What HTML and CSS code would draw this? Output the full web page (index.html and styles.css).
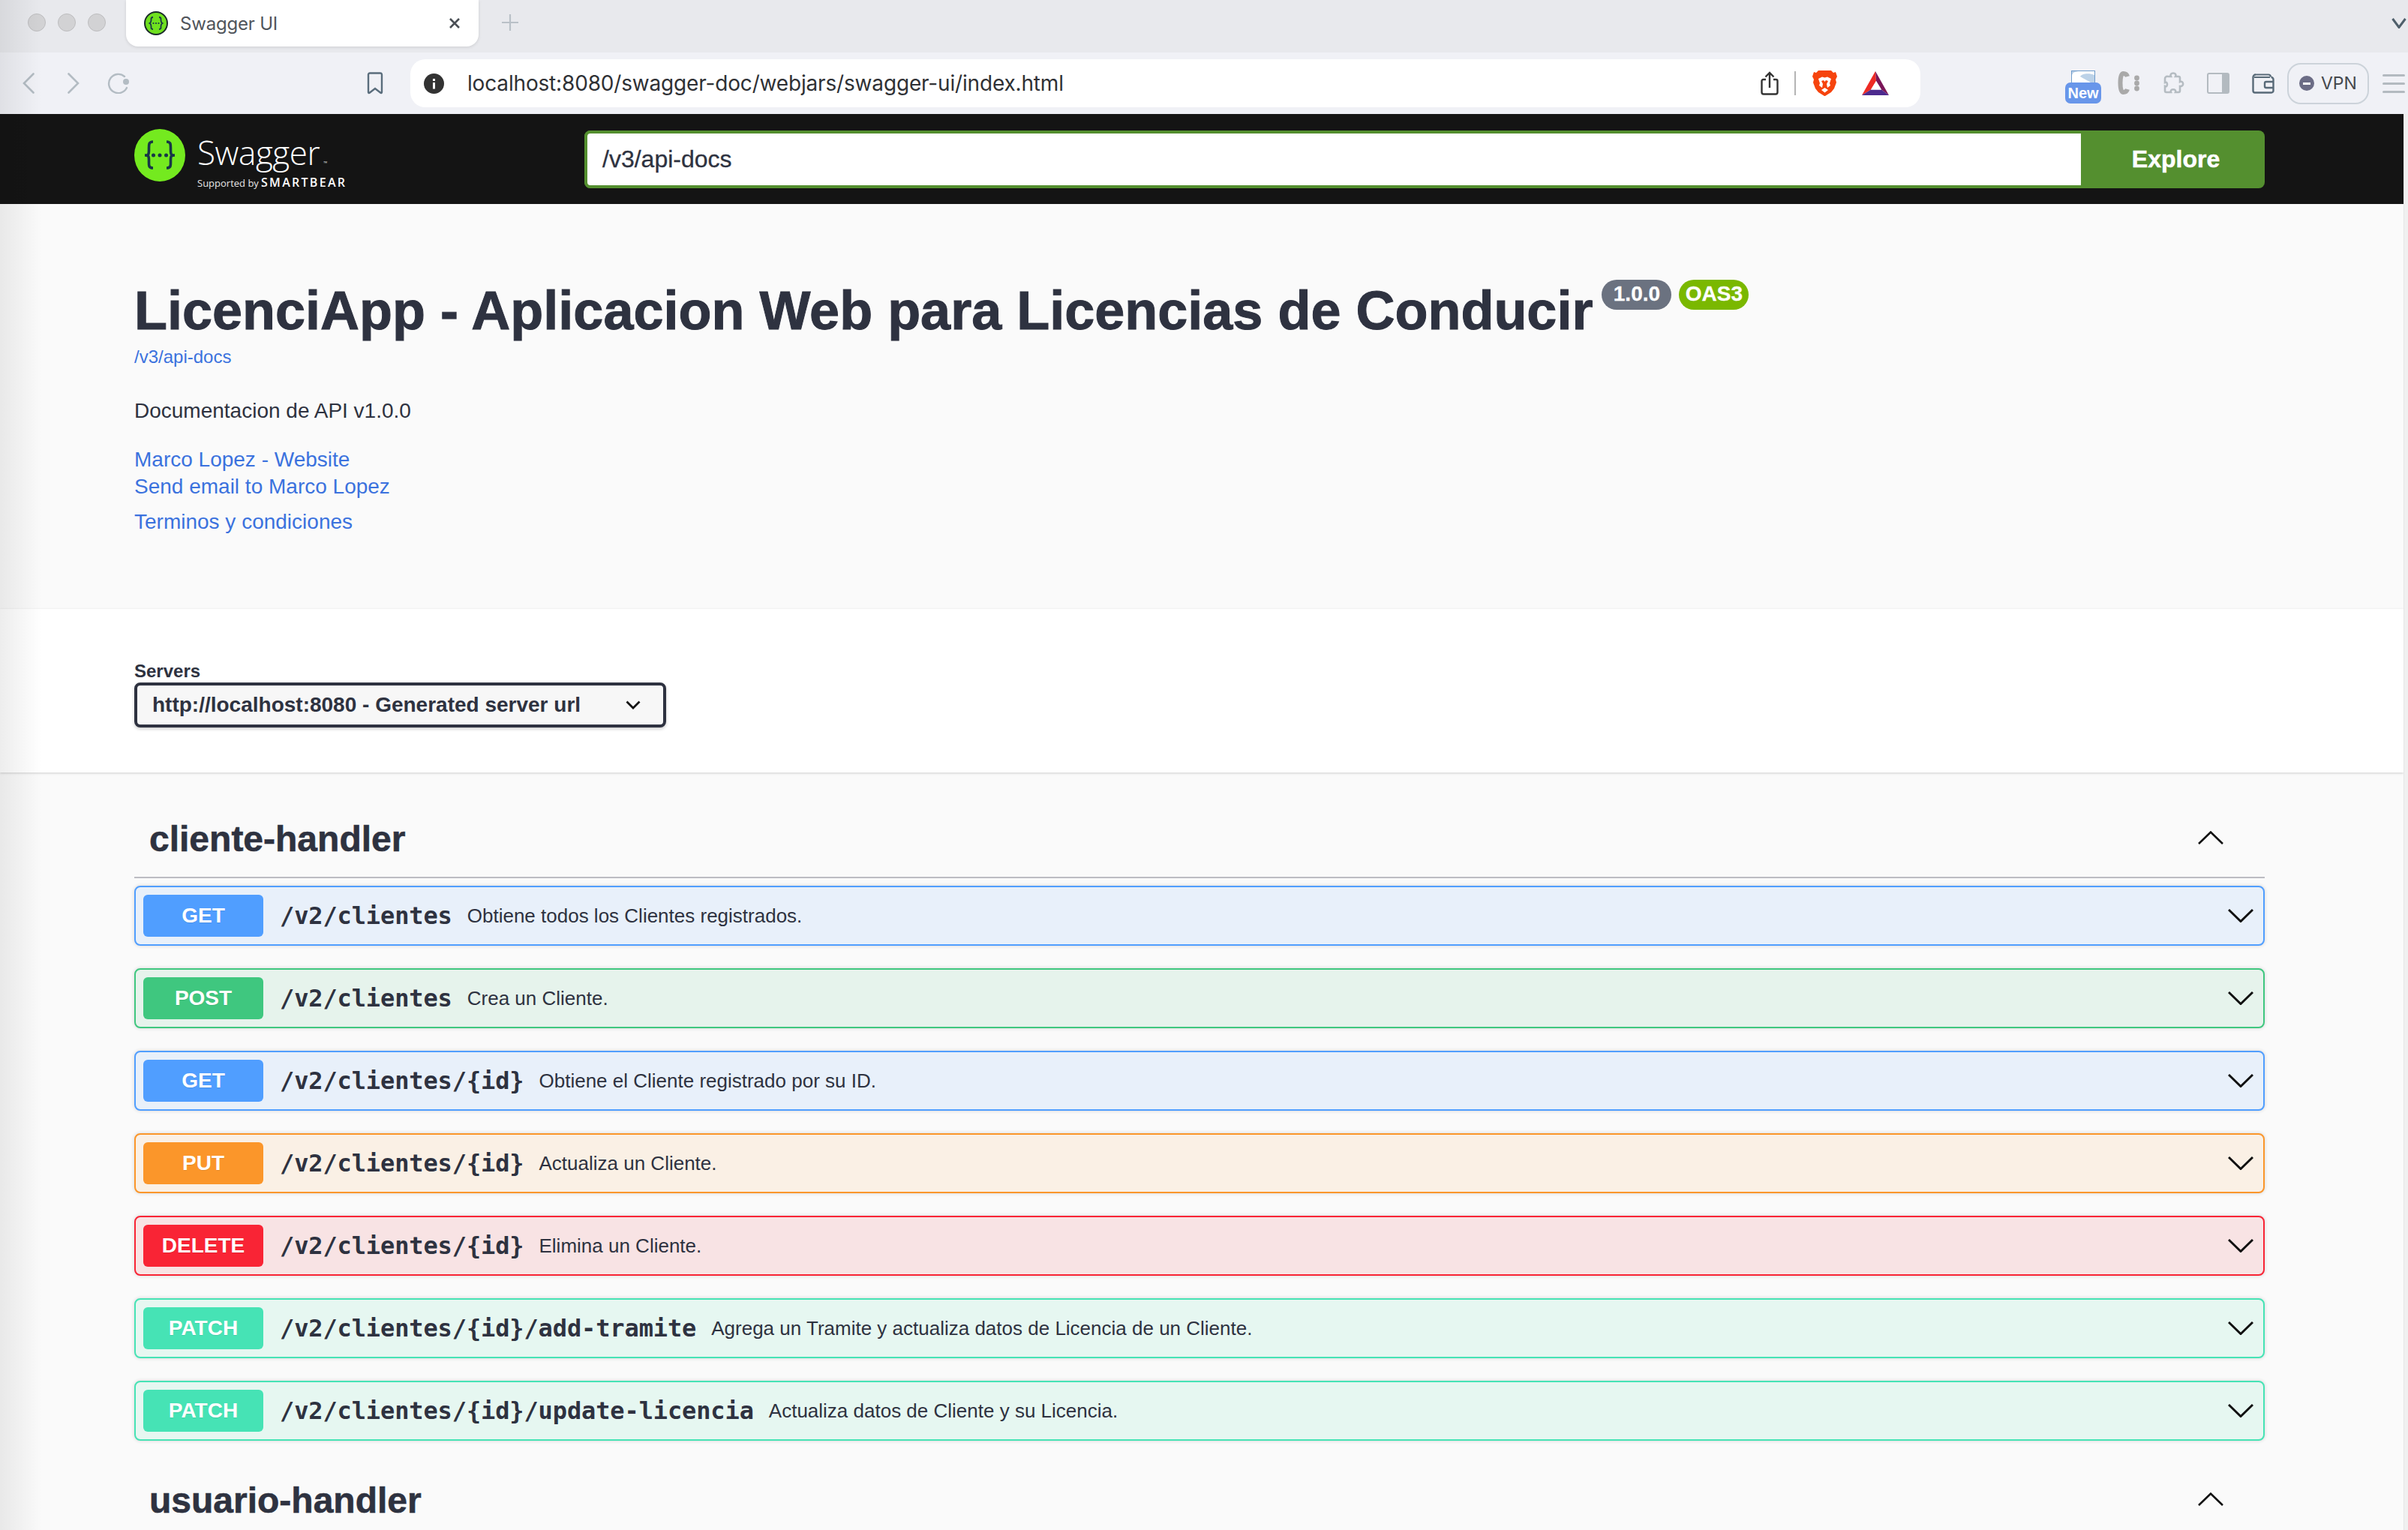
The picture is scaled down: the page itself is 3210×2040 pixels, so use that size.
FILE: index.html
```html
<!DOCTYPE html>
<html lang="es">
<head>
<meta charset="utf-8">
<title>Swagger UI</title>
<link rel="stylesheet" href="styles.css">
</head>
<body>
<div class="window-shade"></div>
<header class="tabstrip">
  <div class="lights"><span class="light"></span><span class="light"></span><span class="light"></span></div>
  <div class="tab">
    <svg class="favicon" viewBox="0 0 32 32"><circle cx="16" cy="16" r="15" fill="#6fe01f" stroke="#1a2a2a" stroke-width="2"/><path d="M12 8c-3 0-2.500 2-2.500 4s0 3-2 4c2 1 2 2 2 4s-.5 4 2.500 4M20 8c3 0 2.500 2 2.500 4s0 3 2 4c-2 1-2 2-2 4s.5 4-2.500 4" fill="none" stroke="#173647" stroke-width="1.800"/><circle cx="12.500" cy="16" r="1.100" fill="#173647"/><circle cx="16" cy="16" r="1.100" fill="#173647"/><circle cx="19.500" cy="16" r="1.100" fill="#173647"/></svg>
    <span class="tab-title">Swagger UI</span>
    <svg class="tab-close" viewBox="0 0 16 16"><path d="M2 2l12 12M14 2L2 14" stroke="#4a4f55" stroke-width="2.600" fill="none"/></svg>
  </div>
  <svg class="tab-plus" viewBox="0 0 22 22"><path d="M11 0v22M0 11h22" stroke="#b9c0c7" stroke-width="2.200" fill="none"/></svg>
  <svg class="tab-menu" viewBox="0 0 20 14"><path d="M1.500 1L10 12.500 18.500 1" stroke="#4f5f6b" stroke-width="3" fill="none"/></svg>
</header>
<nav class="toolbar">
  <svg class="ic-nav" viewBox="0 0 16 28"><path d="M14.500 1.500L2 14l12.500 12.500" fill="none" stroke="#b3bcc3" stroke-width="2.600" stroke-linecap="round"/></svg>
  <svg class="ic-nav fwd" viewBox="0 0 16 28"><path d="M1.500 1.500L14 14 1.500 26.500" fill="none" stroke="#b3bcc3" stroke-width="2.600" stroke-linecap="round"/></svg>
  <svg class="ic-reload" viewBox="0 0 30 28"><path d="M23 5A12.600 12.600 0 1 0 26 20" fill="none" stroke="#b3bcc3" stroke-width="2.400" stroke-linecap="round"/><circle cx="25" cy="12" r="4" fill="#b3bcc3"/></svg>
  <svg class="ic-bookmark" viewBox="0 0 22 30"><path d="M2 3.500a2 2 0 0 1 2-2h14a2 2 0 0 1 2 2V27a1 1 0 0 1-1.600.8L11 22l-7.400 5.800A1 1 0 0 1 2 27z" fill="none" stroke="#5a6d7c" stroke-width="2.400"/></svg>
  <div class="urlbar">
    <svg class="ic-info" viewBox="0 0 27 27"><circle cx="13.500" cy="13.500" r="13.500" fill="#333"/><rect x="12" y="12" width="3" height="8.500" fill="#fff"/><rect x="12" y="7" width="3" height="3" fill="#fff"/></svg>
    <span class="url-text">localhost:8080/swagger-doc/webjars/swagger-ui/index.html</span>
    <svg class="ic-share" viewBox="0 0 24 32"><path d="M7 11H3.500a2 2 0 0 0-2 2v15a2.500 2.500 0 0 0 2.500 2.500h16a2.500 2.500 0 0 0 2.500-2.500V13a2 2 0 0 0-2-2H17M12 22V2M6.500 7.500L12 2l5.500 5.500" fill="none" stroke="#333" stroke-width="2.400"/></svg>
    <span class="url-sep"></span>
    <svg class="ic-brave" viewBox="0 0 33 36"><path d="M8 1h17l3 3 3-1 2 6-2 4 1 4-3 8-4 5-8 5h-1l-8-5-4-5-3-8 1-4-2-4 2-6 3 1z" fill="#f6440e"/><path d="M8 12l5-2.500 3.500 1 3.500-1 5 2.500-2 6 1 3-4 3-1-5 2-4-3-1-1.500 2-1.500-2-3 1 2 4-1 5-4-3 1-3z" fill="#fff"/><path d="M12 27l4.500-3 4.500 3-4.500 3.500z" fill="#fff"/></svg>
    <svg class="ic-bat" viewBox="0 0 36 32"><path d="M18 0L0 32l12-7.400L19 13z" fill="#ee2a24"/><path d="M18 0l18 32-10-7.400L19 13z" fill="#7a1558"/><path d="M0 32h36l-10-7.400H12z" fill="#4c2a8e"/><path d="M19 13l7 11.600H12z" fill="#fff"/></svg>
  </div>
  <div class="ext-new">
    <svg class="ext-s" viewBox="0 0 32 16"><rect width="32" height="16" fill="#6f9ccb"/><rect x="1" y="1" width="30" height="15" fill="#bcd2e8"/><path d="M1 16V7c0-4 5-6 10-6h20v5C24 3 14 4 12 8c4 3 10 5 14 8z" fill="#fff"/></svg>
    <span class="new-badge">New</span>
  </div>
  <svg class="ic-c" viewBox="0 0 30 32"><path d="M13 7C12 3.500 9 3 7.500 3 5 3 3.500 7 3.500 15.500S5 28 7.500 28c1.500 0 4.500-.5 5.500-4" fill="none" stroke="#a9a9a9" stroke-width="6"/><circle cx="25.500" cy="9" r="3.400" fill="#a9a9a9"/><circle cx="25.500" cy="16" r="3.400" fill="#a9a9a9"/><circle cx="25.500" cy="23" r="3.400" fill="#a9a9a9"/></svg>
  <svg class="ic-puzzle" viewBox="0 0 30 30"><path d="M8 6h4c-3-6 9-6 6 0h4a2 2 0 0 1 2 2v5c5-2 6 7 0 6v6a2 2 0 0 1-2 2h-4c2-5-8-5-6 0H6a2 2 0 0 1-2-2v-6c4 2 4-7 0-5V9a3 3 0 0 1 4-3z" fill="none" stroke="#b5bcc2" stroke-width="2.600"/></svg>
  <svg class="ic-side" viewBox="0 0 30 28"><rect x="1" y="1" width="28" height="26" rx="2" fill="none" stroke="#b3bac0" stroke-width="2"/><rect x="20" y="1" width="9" height="26" fill="#b3bac0"/></svg>
  <svg class="ic-wallet" viewBox="0 0 30 27"><path d="M3 5h21M5 1.500h17a3 3 0 0 1 3 3" fill="none" stroke="#586a78" stroke-width="2.200"/><path d="M1.500 5v18a2.500 2.500 0 0 0 2.500 2.500h22a2.500 2.500 0 0 0 2.500-2.500V8a3 3 0 0 0-3-3M1.500 5a3.500 3.500 0 0 1 3.500-3.500" fill="none" stroke="#586a78" stroke-width="2.400"/><path d="M28 11h-9a2 2 0 0 0-2 2v4a2 2 0 0 0 2 2h9" fill="none" stroke="#586a78" stroke-width="2.400"/></svg>
  <div class="vpn"><span class="vpn-dot"><span class="vpn-bar"></span></span><span class="vpn-label">VPN</span></div>
  <div class="burger"><span></span><span></span><span></span></div>
</nav>
<div class="viewport">
  <main class="page">
    <section class="topbar">
      <div class="brand">
        <svg class="logo" viewBox="0 0 68 70"><ellipse cx="34" cy="35" rx="34" ry="35" fill="#74ea1f"/><path d="M25 17c-6.500 0-5.500 5-5.500 11s-.5 7-5.500 7c5 0 5.500 1 5.500 7s-1 10 5.500 10M43 17c6.500 0 5.500 5 5.500 11s.5 7 5.500 7c-5 0-5.500 1-5.500 7s1 10-5.500 10" fill="none" stroke="#173647" stroke-width="3.600"/><circle cx="25.500" cy="35" r="2.500" fill="#173647"/><circle cx="34" cy="35" r="2.500" fill="#173647"/><circle cx="42.500" cy="35" r="2.500" fill="#173647"/></svg>
        <div class="brand-text">
          <div class="brand-name">Swagger<span class="tm">™</span></div>
          <div class="brand-sub"><span class="sub-by">Supported by</span><span class="sub-sb">SMARTBEAR</span></div>
        </div>
      </div>
      <form class="explore">
        <div class="explore-input">/v3/api-docs</div>
        <div class="explore-btn">Explore</div>
      </form>
    </section>

    <section class="info">
      <h1 class="title">LicenciApp - Aplicacion Web para Licencias de Conducir<span class="badge badge-version">1.0.0</span><span class="badge badge-oas">OAS3</span></h1>
      <a class="link-spec">/v3/api-docs</a>
      <p class="desc">Documentacion de API v1.0.0</p>
      <a class="info-link first">Marco Lopez - Website</a>
      <a class="info-link">Send email to Marco Lopez</a>
      <a class="info-link terms">Terminos y condiciones</a>
    </section>

    <section class="servers">
      <div class="servers-label">Servers</div>
      <div class="select">
        <span>http://localhost:8080 - Generated server url</span>
        <svg class="select-chev" viewBox="0 0 20 12"><path d="M1.500 1.500L10 10l8.500-8.500" fill="none" stroke="#111" stroke-width="2.800"/></svg>
      </div>
    </section>

    <section class="ops">
      <div class="tag">
        <h2 class="tag-name">cliente-handler</h2>
        <svg class="tag-chev" viewBox="0 0 34 18"><path d="M1 17L17 1.500 33 17" fill="none" stroke="#111" stroke-width="2.600"/></svg>
      </div>
      <div class="rows">
        <div class="op get"><span class="method">GET</span><span class="path">/v2/clientes</span><span class="summary">Obtiene todos los Clientes registrados.</span><svg class="op-chev" viewBox="0 0 34 18"><path d="M1 1l16 15.500L33 1" fill="none" stroke="#111" stroke-width="3"/></svg></div>
        <div class="op post"><span class="method">POST</span><span class="path">/v2/clientes</span><span class="summary">Crea un Cliente.</span><svg class="op-chev" viewBox="0 0 34 18"><path d="M1 1l16 15.500L33 1" fill="none" stroke="#111" stroke-width="3"/></svg></div>
        <div class="op get"><span class="method">GET</span><span class="path">/v2/clientes/{id}</span><span class="summary">Obtiene el Cliente registrado por su ID.</span><svg class="op-chev" viewBox="0 0 34 18"><path d="M1 1l16 15.500L33 1" fill="none" stroke="#111" stroke-width="3"/></svg></div>
        <div class="op put"><span class="method">PUT</span><span class="path">/v2/clientes/{id}</span><span class="summary">Actualiza un Cliente.</span><svg class="op-chev" viewBox="0 0 34 18"><path d="M1 1l16 15.500L33 1" fill="none" stroke="#111" stroke-width="3"/></svg></div>
        <div class="op delete"><span class="method">DELETE</span><span class="path">/v2/clientes/{id}</span><span class="summary">Elimina un Cliente.</span><svg class="op-chev" viewBox="0 0 34 18"><path d="M1 1l16 15.500L33 1" fill="none" stroke="#111" stroke-width="3"/></svg></div>
        <div class="op patch"><span class="method">PATCH</span><span class="path">/v2/clientes/{id}/add-tramite</span><span class="summary">Agrega un Tramite y actualiza datos de Licencia de un Cliente.</span><svg class="op-chev" viewBox="0 0 34 18"><path d="M1 1l16 15.500L33 1" fill="none" stroke="#111" stroke-width="3"/></svg></div>
        <div class="op patch"><span class="method">PATCH</span><span class="path">/v2/clientes/{id}/update-licencia</span><span class="summary">Actualiza datos de Cliente y su Licencia.</span><svg class="op-chev" viewBox="0 0 34 18"><path d="M1 1l16 15.500L33 1" fill="none" stroke="#111" stroke-width="3"/></svg></div>
      </div>
      <div class="tag second">
        <h2 class="tag-name">usuario-handler</h2>
        <svg class="tag-chev" viewBox="0 0 34 18"><path d="M1 17L17 1.500 33 17" fill="none" stroke="#111" stroke-width="2.600"/></svg>
      </div>
    </section>
  </main>
  <div class="scrollstrip"></div>
</div>
</body>
</html>
```
FILE: styles.css
```css
* { box-sizing: border-box; }
html, body { margin: 0; padding: 0; height: 2040px; overflow: hidden; }
body { width: 3210px; display: flex; flex-direction: column; font-family: "Liberation Sans", Arial, sans-serif; color: #2e3240; background: #fafafa; position: relative; }
svg { display: block; flex: none; }

.window-shade { position: absolute; left: 0; top: 0; width: 56px; height: 2040px; background: linear-gradient(90deg, rgba(0,0,0,.07), rgba(0,0,0,0)); pointer-events: none; z-index: 5; }

/* tab strip */
.tabstrip { height: 70px; flex: none; background: #e8e9ed; display: flex; align-items: flex-start; padding-left: 37px; }
.lights { display: flex; gap: 16px; margin-top: 18px; width: 131px; }
.light { width: 24px; height: 24px; border-radius: 50%; background: #d2d2d4; border: 1px solid #bdbdbf; }
.tab { width: 470px; height: 62px; background: #fff; border-radius: 0 0 16px 16px; box-shadow: 0 1px 4px rgba(0,0,0,.12); display: flex; align-items: center; padding-left: 24px; }
.favicon { width: 32px; height: 32px; }
.tab-title { margin-left: 16px; font: 400 24px "Inter", sans-serif; color: #50555b; letter-spacing: -.2px; }
.tab-close { width: 16px; height: 16px; margin-left: auto; margin-right: 24px; }
.tab-plus { width: 22px; height: 22px; margin: 19px 0 0 31px; }
.tab-menu { width: 20px; height: 14px; margin: 24px 2px 0 auto; }

/* toolbar */
.toolbar { height: 82px; flex: none; background: #f0f1f6; display: flex; align-items: center; padding-left: 30px; }
.ic-nav { width: 16px; height: 28px; }
.ic-nav.fwd { margin-left: 44px; }
.ic-reload { width: 30px; height: 28px; margin-left: 37px; }
.ic-bookmark { width: 22px; height: 30px; margin-left: 316px; }
.urlbar { width: 2013px; height: 64px; margin-left: 36px; background: #fff; border-radius: 20px; display: flex; align-items: center; padding-left: 18px; }
.ic-info { width: 27px; height: 27px; }
.url-text { margin-left: 31px; font: 400 28px "Inter", sans-serif; color: #2f3135; letter-spacing: -.17px; white-space: nowrap; }
.ic-share { width: 24px; height: 32px; margin-left: auto; }
.url-sep { width: 2px; height: 32px; background: #b4b4b4; margin-left: 21px; }
.ic-brave { width: 33px; height: 36px; margin-left: 22px; }
.ic-bat { width: 36px; height: 32px; margin-left: 33px; margin-right: 42px; }
.ext-new { width: 48px; height: 46px; margin-left: 193px; position: relative; align-self: flex-start; margin-top: 24px; }
.ext-s { width: 32px; height: 16px; margin-left: 8px; }
.new-badge { position: absolute; left: 0; top: 16px; width: 48px; height: 28px; background: #6896ea; border-radius: 7px; color: #fff; font: 700 20px/28px "Liberation Sans", sans-serif; text-align: center; }
.ic-c { width: 30px; height: 32px; margin-left: 22px; }
.ic-puzzle { width: 30px; height: 30px; margin-left: 29px; }
.ic-side { width: 30px; height: 28px; margin-left: 30px; }
.ic-wallet { width: 30px; height: 27px; margin-left: 30px; }
.vpn { width: 109px; height: 55px; margin-left: 17px; border: 2px solid #ccd3da; border-radius: 18px; display: flex; align-items: center; padding-left: 14px; }
.vpn-dot { width: 20px; height: 20px; border-radius: 50%; background: #6b6c85; display: flex; align-items: center; justify-content: center; }
.vpn-bar { width: 10px; height: 3px; background: #fff; }
.vpn-label { margin-left: 9px; font: 400 23px "Inter", sans-serif; color: #45484d; }
.burger { width: 30px; margin-left: 18px; display: flex; flex-direction: column; gap: 8px; }
.burger span { height: 3px; background: #b3bac0; border-radius: 2px; }

/* page */
.viewport { flex: 1; display: flex; min-height: 0; }
.page { flex: 1; min-width: 0; overflow: hidden; }
.scrollstrip { width: 6px; background: #f0f0f0; border-left: 1px solid #e6e6e6; }

.topbar { height: 120px; background: #141414; display: flex; align-items: center; padding: 0 185px 0 179px; }
.brand { display: flex; width: 600px; flex: none; align-items: flex-start; height: 80px; }
.logo { width: 68px; height: 70px; }
.brand-text { margin-left: 16px; color: #fff; font-family: "Open Sans", sans-serif; }
.brand-name { font-size: 44px; font-weight: 300; line-height: 46px; letter-spacing: -.4px; margin-top: 8px; white-space: nowrap; }
.tm { font-size: 7px; letter-spacing: 0; margin-left: 5px; line-height: 0; }
.brand-sub { display: flex; align-items: baseline; margin-top: 9px; line-height: 16px; white-space: nowrap; }
.sub-by { font-size: 13px; width: 85px; letter-spacing: 0; color: #e6e6e6; }
.sub-sb { font-size: 16px; font-weight: 600; letter-spacing: 2.300px; }
.explore { display: flex; flex: 1; height: 77px; margin: 0; border-radius: 8px; background: #548f2f; }
.explore-input { width: 1999px; flex: none; height: 77px; border: 4px solid #548f2f; border-radius: 8px 0 0 8px; background: #fff; color: #2e3240; font-size: 32px; line-height: 69px; padding-left: 20px; -webkit-text-stroke: .3px #2e3240; }
.explore-btn { flex: 1; text-align: center; color: #fff; font-size: 32px; font-weight: 700; line-height: 77px; padding-left: 4px; -webkit-text-stroke: .5px #fff; }

.info { height: 540px; padding: 97px 0 0 179px; background: #fafafa; }
.title { margin: 0; font-size: 72px; font-weight: 700; line-height: 90px; color: #2e3240; white-space: nowrap; -webkit-text-stroke: 1px #2e3240; }
.badge { display: inline-block; height: 40px; line-height: 38px; border-radius: 20px; width: 93px; margin-left: 10px; text-align: center; color: #fff; font-size: 28px; font-weight: 700; vertical-align: top; margin-top: 4px; -webkit-text-stroke: .3px #fff; }
.badge-version { background: #6b7280; margin-left: 12px; }
.badge-oas { background: #7ab800; }
.link-spec { display: block; font-size: 24px; line-height: 30px; margin-top: 2px; color: #3b72de; }
.desc { margin: 39px 0 29px; font-size: 28px; line-height: 36px; color: #2e3240; }
.info-link { display: block; font-size: 28px; line-height: 36px; color: #3b72de; }
.info-link.terms { margin-top: 11px; }

.servers { height: 218px; background: #fff; padding: 69px 0 0 179px; box-shadow: 0 1px 3px rgba(0,0,0,.18); position: relative; }
.servers-label { font-size: 24px; font-weight: 700; line-height: 28px; margin-bottom: 1px; color: #2e3240; }
.select { width: 709px; height: 60px; border: 4px solid #2e3240; border-radius: 8px; background: #f7f7f7; box-shadow: 0 2px 4px rgba(0,0,0,.2); display: flex; align-items: center; justify-content: space-between; padding: 0 30px 0 20px; font-size: 28px; font-weight: 700; color: #2e3240; }
.select-chev { width: 20px; height: 12px; }

.ops { padding: 59px 185px 0 179px; background: #fafafa; height: 1000px; }
.tag { display: flex; justify-content: space-between; align-items: flex-start; height: 82px; border-bottom: 2px solid #bcbcc2; padding: 0 55px 0 20px; }
.tag.second { margin-top: 50px; }
.tag-name { margin: 0; font-size: 48px; font-weight: 700; line-height: 60px; color: #2e3240; -webkit-text-stroke: .6px #2e3240; }
.tag-chev { width: 34px; height: 18px; margin-top: 19px; }
.rows { display: flex; flex-direction: column; gap: 30px; margin-top: 10px; }
.op { height: 80px; border: 2px solid; border-radius: 8px; display: flex; align-items: center; padding: 0 13px 0 10px; box-shadow: 0 0 5px rgba(0,0,0,.16); }
.method { width: 160px; height: 56px; border-radius: 6px; color: #fff; text-align: center; font-size: 28px; font-weight: 700; line-height: 56px; text-shadow: 0 1px 0 rgba(0,0,0,.1); }
.path { margin-left: 22px; font: 700 32px "DejaVu Sans Mono", "Liberation Mono", monospace; letter-spacing: -.12px; color: #2e3240; white-space: nowrap; }
.summary { margin-left: 20px; font-size: 26px; color: #2e3240; white-space: nowrap; }
.op-chev { width: 34px; height: 18px; margin-left: auto; }
.get { border-color: #509eff; background: #e8f0fa; } .get .method { background: #509eff; }
.post { border-color: #3fc77f; background: #e6f3ec; } .post .method { background: #3fc77f; }
.put { border-color: #fb962a; background: #faf0e5; } .put .method { background: #fb962a; }
.delete { border-color: #f92435; background: #f8e3e4; } .delete .method { background: #f92435; }
.patch { border-color: #46e3b5; background: #e6f7f1; } .patch .method { background: #46e3b5; }
```
